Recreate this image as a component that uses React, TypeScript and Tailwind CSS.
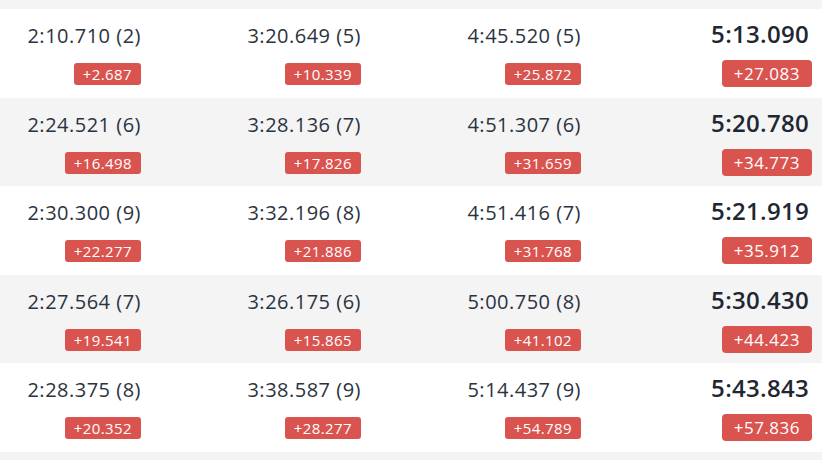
const rows = [
  { s1: '2:10.710 (2)', d1: '+2.687', s2: '3:20.649 (5)', d2: '+10.339', s3: '4:45.520 (5)', d3: '+25.872', total: '5:13.090', gap: '+27.083' },
  { s1: '2:24.521 (6)', d1: '+16.498', s2: '3:28.136 (7)', d2: '+17.826', s3: '4:51.307 (6)', d3: '+31.659', total: '5:20.780', gap: '+34.773' },
  { s1: '2:30.300 (9)', d1: '+22.277', s2: '3:32.196 (8)', d2: '+21.886', s3: '4:51.416 (7)', d3: '+31.768', total: '5:21.919', gap: '+35.912' },
  { s1: '2:27.564 (7)', d1: '+19.541', s2: '3:26.175 (6)', d2: '+15.865', s3: '5:00.750 (8)', d3: '+41.102', total: '5:30.430', gap: '+44.423' },
  { s1: '2:28.375 (8)', d1: '+20.352', s2: '3:38.587 (9)', d2: '+28.277', s3: '5:14.437 (9)', d3: '+54.789', total: '5:43.843', gap: '+57.836' },
];

function SplitCell({ time, diff }: { time: string; diff: string }) {
  return (
    <div className="flex flex-col items-end pr-[10px] pt-[14px]">
      <span className="text-[20px] leading-[26px] tracking-[0.5px] text-[#2b3340]">{time}</span>
      <span className="mt-[14px] rounded-[3px] bg-[#d9534f] px-[9px] text-[15px] leading-[22px] font-medium tracking-[0.4px] text-white">
        {diff}
      </span>
    </div>
  );
}

export default function App() {
  return (
    <div className="h-[460px] w-[836px] bg-white" style={{ fontFamily: '"Open Sans", sans-serif' }}>
      <div className="w-[822px] bg-[#f4f4f4] pt-[9px] pb-[8px]">
        {rows.map((r, i) => (
          <div
            key={i}
            className={`grid h-[88.6px] grid-cols-[151px_220px_220px_231px] ${i % 2 === 0 ? 'bg-white' : 'bg-[#f4f4f4]'}`}
          >
            <SplitCell time={r.s1} diff={r.d1} />
            <SplitCell time={r.s2} diff={r.d2} />
            <SplitCell time={r.s3} diff={r.d3} />
            <div className="flex flex-col items-end pr-[10px] pt-[10px]">
              <span className="pr-[3px] text-[24px] leading-[30px] font-semibold tracking-[0.3px] text-[#1f2733]">{r.total}</span>
              <span className="mt-[11px] rounded-[4px] bg-[#d9534f] px-[12px] text-[17px] leading-[27px] font-medium tracking-[0.5px] text-white">
                {r.gap}
              </span>
            </div>
          </div>
        ))}
      </div>
    </div>
  );
}
